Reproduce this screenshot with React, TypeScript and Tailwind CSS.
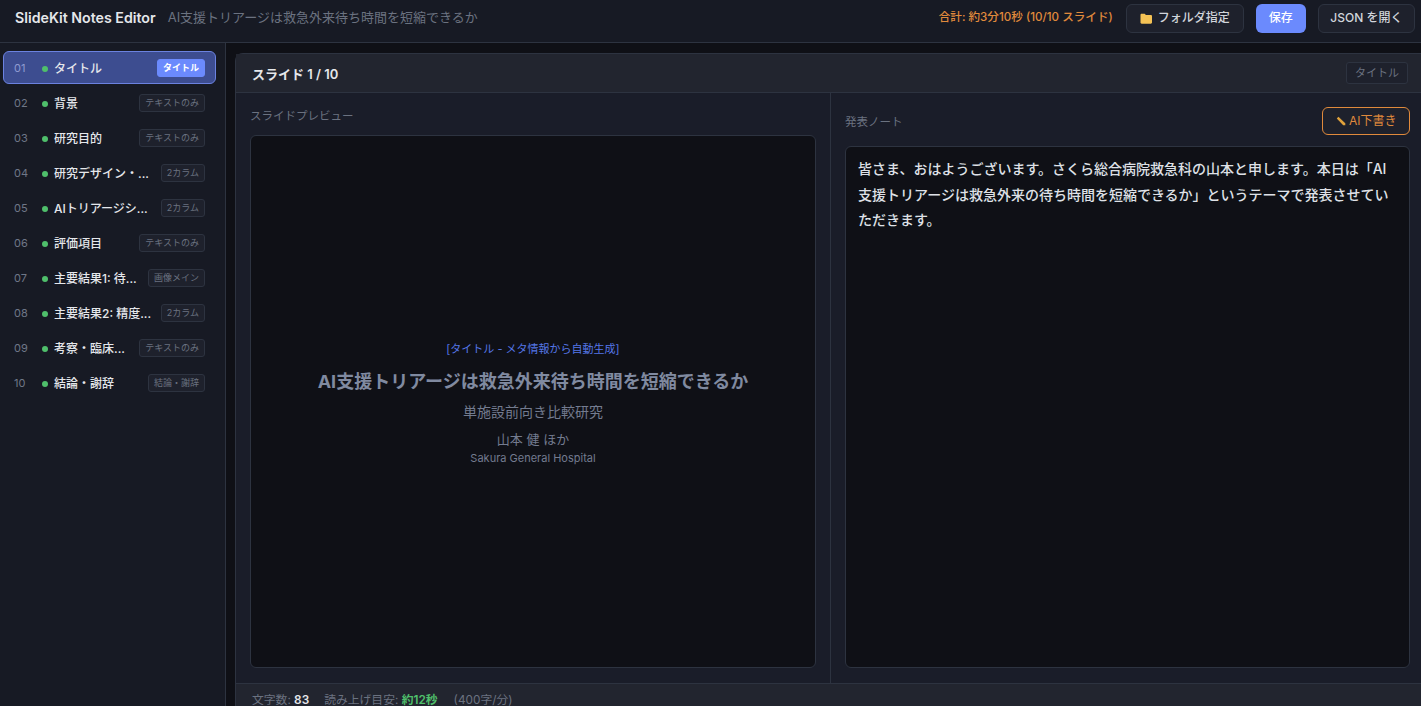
const font = "[font-family:Inter,'Noto_Sans_CJK_JP',sans-serif]";

type Slide = { no: string; title: string; kind: string };

const slides: Slide[] = [
  { no: "01", title: "タイトル", kind: "タイトル" },
  { no: "02", title: "背景", kind: "テキストのみ" },
  { no: "03", title: "研究目的", kind: "テキストのみ" },
  { no: "04", title: "研究デザイン・...", kind: "2カラム" },
  { no: "05", title: "AIトリアージシ...", kind: "2カラム" },
  { no: "06", title: "評価項目", kind: "テキストのみ" },
  { no: "07", title: "主要結果1: 待...", kind: "画像メイン" },
  { no: "08", title: "主要結果2: 精度...", kind: "2カラム" },
  { no: "09", title: "考察・臨床...", kind: "テキストのみ" },
  { no: "10", title: "結論・謝辞", kind: "結論・謝辞" },
];

function SlideRow({ slide, active }: { slide: Slide; active: boolean }) {
  return (
    <div
      className={
        "flex h-[33px] items-center rounded-md border pl-[10px] pr-[10px] pt-[2px] " +
        (active ? "border-[#6b82e0] bg-[#3d4d90]" : "border-transparent")
      }
    >
      <span className={"w-[28px] shrink-0 text-[11px] " + (active ? "text-[#8f9bd0]" : "text-[#6f7787]")}>{slide.no}</span>
      <span className="mr-[6px] h-[6px] w-[6px] shrink-0 rounded-full bg-[#4fbf6b]" />
      <span className="min-w-0 flex-1 whitespace-nowrap text-[12px] font-medium text-[#e5e7eb]">{slide.title}</span>
      <span
        className={
          "-mt-[2px] ml-[4px] shrink-0 rounded-[3px] border px-[5px] py-[1px] text-[9px] leading-[14px] " +
          (active ? "border-[#6b8afd] bg-[#6b8afd] font-semibold text-white" : "border-[#2d3340] bg-[#1e212c] text-[#6b7280]")
        }
      >
        {slide.kind}
      </span>
    </div>
  );
}

export default function App() {
  return (
    <div className={font + " flex h-[706px] flex-col overflow-hidden bg-[#0f1016] text-[#e5e7eb]"}>
      <header className="flex h-[43px] shrink-0 items-center border-b border-[#2d3340] bg-[#171a24] pb-[6px] pl-[15px] pr-[6px]">
        <h1 className="text-[14.2px] font-semibold text-[#e5e7eb]">SlideKit Notes Editor</h1>
        <span className="ml-[12px] text-[13px] text-[#6b7280]">AI支援トリアージは救急外来待ち時間を短縮できるか</span>
        <div className="ml-auto flex items-center gap-[12px]">
          <span className="mr-[1px] text-[11.6px] font-medium text-[#e08a3c]">合計: 約3分10秒 (10/10 スライド)</span>
          <button className="flex h-[29px] items-center gap-[5px] rounded-md border border-[#2d3340] bg-[#1e212c] px-[13px] text-[12px] font-medium text-[#d1d5db]">
            <svg width="13" height="13" viewBox="0 0 13 13" className="shrink-0">
              <path d="M.5 3C.5 2.2 1 1.7 1.7 1.7h3l1.2 1.4h4.9c.7 0 1.2.5 1.2 1.2v6.3c0 .7-.5 1.2-1.2 1.2H1.7c-.7 0-1.2-.5-1.2-1.2z" fill="#f4c255" />
            </svg>
            フォルダ指定
          </button>
          <button className="h-[29px] rounded-md bg-[#6b8afd] px-[13px] text-[12px] font-medium text-white">保存</button>
          <button className="h-[29px] rounded-md border border-[#2d3340] bg-[#1e212c] px-[11.5px] text-[12px] font-medium text-[#d1d5db]">JSON を開く</button>
        </div>
      </header>

      <div className="flex min-h-0 flex-1">
        <aside className="flex w-[226px] shrink-0 flex-col gap-[2px] border-r border-[#2d3340] bg-[#171a24] pl-[3px] pr-[9px] pt-[8px]">
          {slides.map((s, i) => (
            <SlideRow key={s.no} slide={s} active={i === 0} />
          ))}
        </aside>

        <main className="min-w-0 flex-1 pl-[9px] pt-[10px]">
          <section className="flex h-full flex-col rounded-tl-lg border-l border-t border-[#2d3340] bg-[#1a1d29]">
            <div className="flex h-[39px] shrink-0 items-center justify-between border-b border-[#2d3340] bg-[#22252f] pl-[16px] pr-[13px]">
              <h2 className="mt-[4px] text-[13px] font-semibold text-[#e5e7eb]">スライド 1 / 10</h2>
              <span className="rounded-[3px] border border-[#2d3340] bg-[#1e212c] px-[8px] py-[2px] text-[11px] leading-[16px] text-[#6b7280]">タイトル</span>
            </div>

            <div className="flex min-h-0 flex-1">
              <div className="flex w-[595px] shrink-0 flex-col border-r border-[#2d3340] px-[14px] pb-[15px] pt-[16px]">
                <div className="mb-[11px] h-[15px] text-[11.5px] leading-[15px] text-[#6b7280]">スライドプレビュー</div>
                <div className="flex min-h-0 flex-1 flex-col items-center justify-center rounded-md border border-[#2d3340] bg-[#0f1016] pt-[5px]">
                  <div className="text-[11px] leading-[15px] text-[#5577e8]">[タイトル - メタ情報から自動生成]</div>
                  <div className="mt-[13px] text-[18px] font-bold leading-[24px] text-[#808aa0]">AI支援トリアージは救急外来待ち時間を短縮できるか</div>
                  <div className="mt-[8px] text-[14px] leading-[20px] text-[#737b8f]">単施設前向き比較研究</div>
                  <div className="mt-[8px] text-[13px] leading-[18px] text-[#737b8f]">山本 健 ほか</div>
                  <div className="mt-[2px] text-[11px] leading-[16px] text-[#737b8f]">Sakura General Hospital</div>
                </div>
              </div>

              <div className="flex min-w-0 flex-1 flex-col pb-[15px] pl-[14px] pr-[11px] pt-[14px]">
                <div className="mb-[11px] flex h-[28px] items-center justify-between">
                  <span className="mt-[4px] text-[11.5px] text-[#6b7280]">発表ノート</span>
                  <button className="flex h-[28px] items-center gap-[3px] rounded-md border border-[#e08a3c] bg-[#1e212c] px-[12.5px] text-[12px] text-[#e08a3c]">
                    <svg width="10" height="10" viewBox="0 0 10 10" className="shrink-0">
                      <path d="M.8 2.4 2.4.8l6.9 6.4v2.1H7.2z" fill="#e0a23c" />
                    </svg>
                    AI下書き
                  </button>
                </div>
                <div className="min-h-0 flex-1 rounded-md border border-[#2d3340] bg-[#0f1016] px-[12px] py-[9px] text-[14px] font-medium leading-[25.6px] text-[#dfe1e7]">
                  皆さま、おはようございます。さくら総合病院救急科の山本と申します。本日は「AI支援トリアージは救急外来の待ち時間を短縮できるか」というテーマで発表させていただきます。
                </div>
              </div>
            </div>

            <div className="flex h-[23px] shrink-0 items-start gap-[15px] border-t border-[#2d3340] bg-[#22252f] pl-[16px] pt-[8px] text-[11.8px] leading-[16px] text-[#6b7280]">
              <span>文字数: <b className="font-semibold text-[#e5e7eb]">83</b></span>
              <span>読み上げ目安: <b className="font-semibold text-[#4fbf6b]">約12秒</b></span>
              <span className="ml-px">(400字/分)</span>
            </div>
          </section>
        </main>
      </div>
    </div>
  );
}
